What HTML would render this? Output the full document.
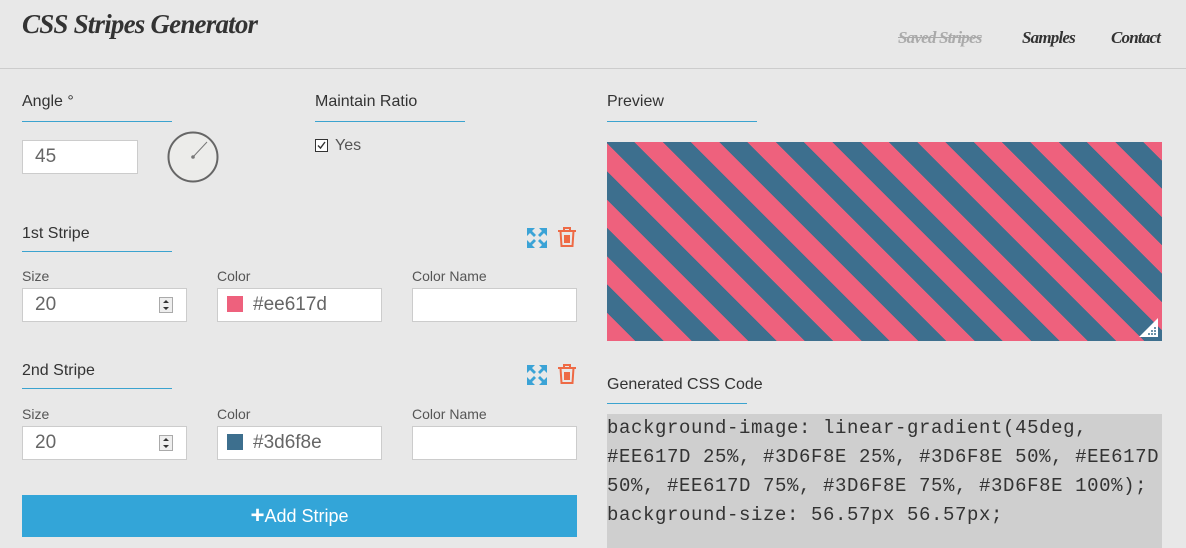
<!DOCTYPE html>
<html><head><meta charset="utf-8"><style>
body{margin:0;width:1186px;height:548px;background:#e8e8e8;position:relative;overflow:hidden;font-family:"Liberation Sans",sans-serif;color:#333}
.a{position:absolute}
.script{font-family:"Liberation Serif",serif;font-style:italic;font-weight:bold;letter-spacing:-0.8px}
.h{position:absolute;font-size:16px;color:#333;white-space:nowrap}
.u{position:absolute;height:1px;background:#3ba3cf;width:150px}
.lbl{position:absolute;font-size:14px;color:#555}
.in{position:absolute;background:#fff;border:1px solid #ccc;box-sizing:border-box;height:34px;font-size:19px;color:#666;line-height:32px;padding-left:12px}
.sw{display:inline-block;width:16px;height:16px;vertical-align:-2px;margin-right:10px}
</style></head><body>
<div class="a script" style="left:22px;top:9px;font-size:27px;color:#333">CSS Stripes Generator</div>
<div class="a script" style="left:898px;top:28px;font-size:17px;color:#aaa;text-decoration:line-through">Saved Stripes</div>
<div class="a script" style="left:1022px;top:28px;font-size:17px;color:#333">Samples</div>
<div class="a script" style="left:1111px;top:28px;font-size:17px;color:#333">Contact</div>
<div class="a" style="left:0;top:68px;width:1186px;height:1px;background:#ccc"></div>

<div class="h" style="left:22px;top:93px">Angle °</div><div class="u" style="left:22px;top:121px"></div>
<div class="h" style="left:315px;top:93px">Maintain Ratio</div><div class="u" style="left:315px;top:121px"></div>
<div class="in" style="left:22px;top:140px;width:116px">45</div>
<svg class="a" style="left:166px;top:130px" width="56" height="56"><circle cx="27" cy="27" r="24.5" fill="#ececea" stroke="#666" stroke-width="2"/><line x1="27" y1="27" x2="41" y2="12" stroke="#777" stroke-width="1"/><circle cx="27" cy="27" r="1.8" fill="#777"/></svg>
<svg class="a" style="left:315px;top:139px" width="13" height="13"><rect x="0.5" y="0.5" width="12" height="12" fill="#fff" stroke="#333"/><path d="M3 6.5l2.5 2.5 4.5-6" stroke="#333" fill="none" stroke-width="1.4"/></svg>
<div class="lbl" style="left:335px;top:137px;font-size:16px">Yes</div>

<div class="h" style="left:22px;top:225px">1st Stripe</div><div class="u" style="left:22px;top:251px"></div>
<div class="lbl" style="left:22px;top:268px">Size</div>
<div class="lbl" style="left:217px;top:268px">Color</div>
<div class="lbl" style="left:412px;top:268px">Color Name</div>
<div class="in" style="left:22px;top:288px;width:165px">20</div>
<div class="in" style="left:217px;top:288px;width:165px;padding-left:9px"><span class="sw" style="background:#ee617d"></span>#ee617d</div>
<div class="in" style="left:412px;top:288px;width:165px"></div>

<div class="h" style="left:22px;top:362px">2nd Stripe</div><div class="u" style="left:22px;top:388px"></div>
<div class="lbl" style="left:22px;top:406px">Size</div>
<div class="lbl" style="left:217px;top:406px">Color</div>
<div class="lbl" style="left:412px;top:406px">Color Name</div>
<div class="in" style="left:22px;top:426px;width:165px">20</div>
<div class="in" style="left:217px;top:426px;width:165px;padding-left:9px"><span class="sw" style="background:#3d6f8e"></span>#3d6f8e</div>
<div class="in" style="left:412px;top:426px;width:165px"></div>

<svg class="a" style="left:159px;top:297px" width="14" height="16"><rect x="0.5" y="0.5" width="13" height="15" fill="#eee" stroke="#aaa"/><path d="M4 6l3-3 3 3zM4 10l3 3 3-3z" fill="#333"/></svg>
<svg class="a" style="left:159px;top:435px" width="14" height="16"><rect x="0.5" y="0.5" width="13" height="15" fill="#eee" stroke="#aaa"/><path d="M4 6l3-3 3 3zM4 10l3 3 3-3z" fill="#333"/></svg>

<svg class="a" style="left:527px;top:228px" width="20" height="20"><g fill="#3ba3d6"><path d="M0 0h8l-3 3 4 4-2 2-4-4-3 3z"/><path d="M20 0v8l-3-3-4 4-2-2 4-4-3-3z"/><path d="M0 20v-8l3 3 4-4 2 2-4 4 3 3z"/><path d="M20 20h-8l3-3-4-4 2-2 4 4 3-3z"/></g></svg>
<svg class="a" style="left:557px;top:226px" width="20" height="22"><g fill="none" stroke="#ee6a45" stroke-width="2"><path d="M1 5h18M7 5V2h6v3M3.5 5l1 15h11l1-15M8 9v8M10 9v8M12 9v8"/></g></svg>
<svg class="a" style="left:527px;top:365px" width="20" height="20"><g fill="#3ba3d6"><path d="M0 0h8l-3 3 4 4-2 2-4-4-3 3z"/><path d="M20 0v8l-3-3-4 4-2-2 4-4-3-3z"/><path d="M0 20v-8l3 3 4-4 2 2-4 4 3 3z"/><path d="M20 20h-8l3-3-4-4 2-2 4 4 3-3z"/></g></svg>
<svg class="a" style="left:557px;top:363px" width="20" height="22"><g fill="none" stroke="#ee6a45" stroke-width="2"><path d="M1 5h18M7 5V2h6v3M3.5 5l1 15h11l1-15M8 9v8M10 9v8M12 9v8"/></g></svg>

<div class="a" style="left:22px;top:495px;width:555px;height:42px;background:#33a5d8;color:#fff;font-size:18px;line-height:42px;text-align:center"><b style="font-size:24px;vertical-align:-1px">+</b>Add Stripe</div>

<div class="h" style="left:607px;top:93px">Preview</div><div class="u" style="left:607px;top:121px"></div>
<div class="a" style="left:607px;top:142px;width:555px;height:199px;background:repeating-linear-gradient(45deg,#ee617d 0 20px,#3d6f8e 20px 40px)"></div>
<svg class="a" style="left:1139px;top:318px" width="20" height="20"><path d="M19 0V19H0z" fill="#fff"/><g fill="#3d6f8e"><circle cx="10" cy="16" r="1"/><circle cx="13" cy="16" r="1"/><circle cx="16" cy="16" r="1"/><circle cx="13" cy="13" r="1"/><circle cx="16" cy="13" r="1"/><circle cx="16" cy="10" r="1"/></g></svg>

<div class="h" style="left:607px;top:376px">Generated CSS Code</div><div class="u" style="left:607px;top:403px;width:140px"></div>
<div class="a" style="left:607px;top:414px;width:555px;height:134px;background:#cfcfcf;font-family:'Liberation Mono',monospace;font-size:19px;line-height:29px;color:#333;white-space:pre;letter-spacing:0.6px">background-image: linear-gradient(45deg,
#EE617D 25%, #3D6F8E 25%, #3D6F8E 50%, #EE617D
50%, #EE617D 75%, #3D6F8E 75%, #3D6F8E 100%);
background-size: 56.57px 56.57px;</div>
</body></html>
